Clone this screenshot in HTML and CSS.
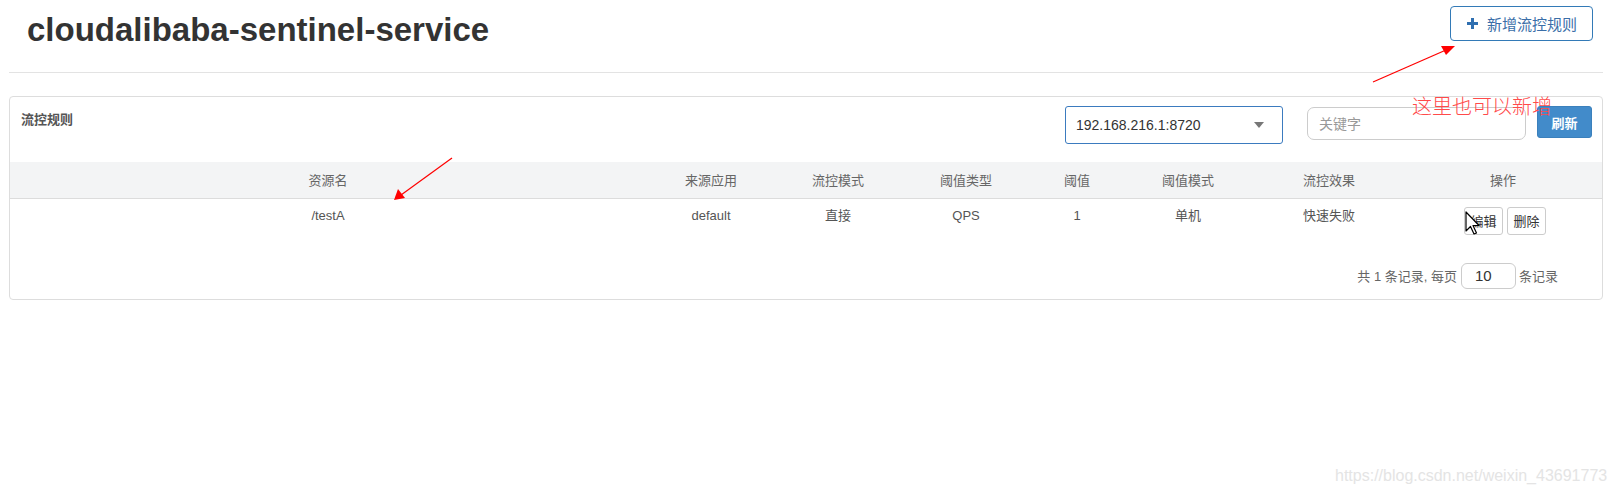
FILE: index.html
```html
<!DOCTYPE html>
<html lang="zh-CN">

<head>
  <meta charset="utf-8">
  <title>流控规则 - cloudalibaba-sentinel-service</title>
  <link rel="stylesheet" href="styles.css">
</head>

<body>
  <div class="wrap">
    <div class="page-header">
      <h1>cloudalibaba-sentinel-service</h1>
      <button class="btn-add" type="button">
        <svg class="plus" width="11" height="11" viewBox="0 0 11 11"><rect x="4" y="0" width="3" height="11" /><rect x="0" y="4" width="11" height="3" /></svg>
        新增流控规则
      </button>
    </div>

    <div class="panel">
      <div class="panel-head">
        <span class="panel-title">流控规则</span>
        <div class="tools">
          <div class="select-box"><span>192.168.216.1:8720</span><i class="caret"></i></div>
          <input class="search" type="text" placeholder="关键字">
          <button class="btn-refresh" type="button">刷新</button>
        </div>
      </div>

      <table class="rules">
        <colgroup>
          <col style="width:636px">
          <col style="width:130px">
          <col style="width:124px">
          <col style="width:132px">
          <col style="width:90px">
          <col style="width:132px">
          <col style="width:150px">
          <col style="width:198px">
        </colgroup>
        <thead>
          <tr>
            <th>资源名</th>
            <th>来源应用</th>
            <th>流控模式</th>
            <th>阈值类型</th>
            <th>阈值</th>
            <th>阈值模式</th>
            <th>流控效果</th>
            <th>操作</th>
          </tr>
        </thead>
        <tbody>
          <tr>
            <td>/testA</td>
            <td>default</td>
            <td>直接</td>
            <td>QPS</td>
            <td>1</td>
            <td>单机</td>
            <td>快速失败</td>
            <td>
              <div class="ops"><button class="btn-sm" type="button">编辑</button><button class="btn-sm" type="button">删除</button></div>
            </td>
          </tr>
        </tbody>
      </table>

      <div class="pager"><span>共 1 条记录, 每页</span><input class="page-size" type="text" value="10"><span>条记录</span></div>
    </div>
  </div>

  <!-- annotations drawn over the screenshot -->
  <svg class="marks" width="1616" height="496" viewBox="0 0 1616 496">
    <line x1="1373" y1="82" x2="1446" y2="50" stroke="#ff0000" stroke-width="1.2" />
    <polygon points="1455,46 1441,46 1446,55" fill="#ff0000" />
    <line x1="452" y1="158" x2="401" y2="195" stroke="#ff0000" stroke-width="1.2" />
    <polygon points="394,200 398,189 405,198" fill="#ff0000" />
  </svg>
  <div class="note">这里也可以新增</div>
  <svg class="cursor" width="16" height="26" viewBox="0 0 16 26">
    <path d="M1 1 L1 20 L5.5 15.5 L9 23 L11.5 22 L8 14.5 L14 14.5 Z" fill="#fff" stroke="#000" stroke-width="1.2" stroke-linejoin="round" />
  </svg>
  <div class="watermark">https://blog.csdn.net/weixin_43691773</div>
</body>

</html>
```

FILE: styles.css
```css
* {
  box-sizing: border-box;
}

body {
  margin: 0;
  background: #fff;
  font-family: "Liberation Sans", "Noto Sans CJK SC", sans-serif;
  font-size: 13px;
  color: #333;
}

.wrap {
  margin-left: 9px;
  width: 1594px;
}

.page-header {
  display: flex;
  justify-content: space-between;
  align-items: flex-start;
  height: 73px;
  padding: 0 10px 0 18px;
  border-bottom: 1px solid #e3e3e3;
}

.page-header h1 {
  margin: 0;
  padding-top: 12px;
  font-size: 33px;
  line-height: 36px;
  font-weight: bold;
  color: #333;
}

.btn-add {
  display: flex;
  align-items: center;
  margin-top: 6px;
  height: 35px;
  padding: 0 15px 0 16px;
  background: #fff;
  border: 1px solid #337ab7;
  border-radius: 4px;
  color: #3a6ea8;
  font-family: inherit;
  font-size: 15px;
}

.btn-add .plus {
  fill: #2f6fb0;
  margin-right: 9px;
}

.panel {
  margin-top: 23px;
  border: 1px solid #ddd;
  border-radius: 4px;
}

.panel-head {
  display: flex;
  justify-content: space-between;
  align-items: flex-start;
  height: 65px;
  padding: 9px 10px 0 11px;
}

.panel-title {
  margin-top: 4px;
  line-height: 20px;
  font-weight: bold;
  color: #555;
}

.tools {
  display: flex;
  align-items: flex-start;
}

.select-box {
  display: flex;
  align-items: center;
  justify-content: space-between;
  width: 218px;
  height: 38px;
  margin-right: 24px;
  padding: 0 18px 0 10px;
  border: 1px solid #3b7bbf;
  border-radius: 3px;
  font-size: 14px;
  color: #333;
}

.caret {
  width: 0;
  height: 0;
  border-left: 5px solid transparent;
  border-right: 5px solid transparent;
  border-top: 6px solid #777;
}

.search {
  width: 219px;
  height: 33px;
  margin: 1px 11px 0 0;
  padding: 0 11px;
  border: 1px solid #ccc;
  border-radius: 7px;
  font-family: inherit;
  font-size: 14px;
}

.search::placeholder {
  color: #999;
}

.btn-refresh {
  width: 55px;
  height: 32px;
  padding: 0;
  background: #428bca;
  border: 1px solid #3b80bc;
  border-radius: 3px;
  color: #fff;
  font-family: inherit;
  font-size: 13px;
  font-weight: bold;
}

.rules {
  width: 100%;
  table-layout: fixed;
  border-collapse: collapse;
}

.rules th {
  height: 36px;
  padding: 0;
  background: #f3f4f5;
  border-bottom: 1px solid #dcdcdc;
  font-weight: normal;
  color: #666;
  text-align: center;
}

.rules td {
  padding: 8px 0;
  line-height: 18px;
  vertical-align: top;
  text-align: center;
  color: #555;
}

.ops {
  display: inline-flex;
  gap: 4px;
  margin-left: 4px;
}

.btn-sm {
  width: 39px;
  height: 28px;
  padding: 0;
  background: #fff;
  border: 1px solid #ccc;
  border-radius: 3px;
  font-family: inherit;
  font-size: 13px;
  color: #333;
}

.pager {
  display: flex;
  justify-content: flex-end;
  align-items: center;
  padding: 20px 44px 10px 0;
  color: #666;
}

.page-size {
  width: 55px;
  height: 26px;
  margin: 0 3px 0 4px;
  padding: 0 13px;
  border: 1px solid #ccc;
  border-radius: 6px;
  font-family: inherit;
  font-size: 15px;
  color: #333;
}

.marks {
  position: absolute;
  top: 0;
  left: 0;
  pointer-events: none;
}

.note {
  position: absolute;
  left: 1412px;
  top: 93px;
  font-family: "Noto Sans CJK SC", sans-serif;
  font-weight: 300;
  font-size: 20px;
  line-height: 26px;
  color: #ff4a4a;
}

.cursor {
  position: absolute;
  left: 1465px;
  top: 211px;
}

.watermark {
  position: absolute;
  left: 1335px;
  top: 466px;
  font-size: 16px;
  line-height: 20px;
  color: #e4e4e4;
}
```
